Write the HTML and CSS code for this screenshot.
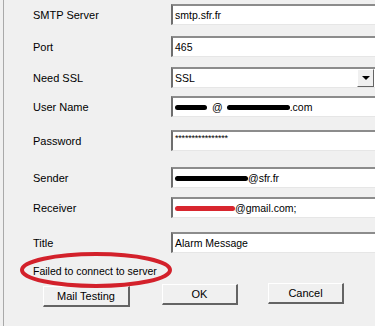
FILE: index.html
```html
<!DOCTYPE html>
<html lang="en">
<head>
    <meta charset="UTF-8">
    <meta name="viewport" content="width=device-width, initial-scale=1.0">
    <title>Mail Settings</title>
    <link rel="stylesheet" href="styles.css">
</head>
<body>
    <div class="dialog">
        <div class="form">
            <div class="row">
                <span class="label">SMTP Server</span>
                <div class="field">smtp.sfr.fr</div>
            </div>
            <div class="row">
                <span class="label">Port</span>
                <div class="field">465</div>
            </div>
            <div class="row">
                <span class="label">Need SSL</span>
                <div class="field select">
                    <span>SSL</span>
                    <span class="drop"><span class="tri"></span></span>
                </div>
            </div>
            <div class="row">
                <span class="label">User Name</span>
                <div class="field">
                    <span class="blot blot-user"></span>
                    <span class="at">@</span>
                    <span class="blot blot-domain"></span>.com
                </div>
            </div>
            <div class="row">
                <span class="label">Password</span>
                <div class="field password">****************</div>
            </div>
            <div class="row">
                <span class="label">Sender</span>
                <div class="field"><span class="blot blot-sender"></span>@sfr.fr</div>
            </div>
            <div class="row">
                <span class="label">Receiver</span>
                <div class="field"><span class="blot blot-red"></span>@gmail.com;</div>
            </div>
            <div class="row">
                <span class="label">Title</span>
                <div class="field">Alarm Message</div>
            </div>
        </div>

        <div class="status">
            Failed to connect to server
            <svg class="mark" width="154" height="38" viewBox="0 0 154 38">
                <ellipse cx="77" cy="19" rx="74" ry="16" fill="none" stroke="#d3212b" stroke-width="4"/>
            </svg>
        </div>

        <div class="buttons">
            <button class="btn btn-test">Mail Testing</button>
            <button class="btn btn-ok">OK</button>
            <button class="btn btn-cancel">Cancel</button>
        </div>
    </div>
</body>
</html>
```

FILE: styles.css
```css
html, body {
    margin: 0;
    padding: 0;
    background: #f0f0f0;
    overflow: hidden;
}
.dialog {
    width: 375px;
    height: 326px;
    box-sizing: border-box;
    padding-top: 4px;
    border-left: 1px solid #a9a9a9;
    margin-left: 3px;
    font-family: "Liberation Sans", Arial, sans-serif;
    font-size: 10.5px;
    color: #000;
    overflow: hidden;
}
.row {
    display: grid;
    grid-template-columns: 138px 220px;
    align-items: center;
    height: 21px;
    padding-left: 29px;
}
.row:nth-child(2) { margin-top: 11px; }
.row:nth-child(3) { margin-top: 10px; }
.row:nth-child(4) { margin-top: 8px; }
.row:nth-child(5) { margin-top: 13px; }
.row:nth-child(6) { margin-top: 16px; }
.row:nth-child(7) { margin-top: 9px; }
.row:nth-child(8) { margin-top: 14px; }
.label {
    font-size: 11px;
}
.field {
    height: 21px;
    box-sizing: border-box;
    background: #fff;
    border-top: 2px solid #8c8c8c;
    border-left: 2px solid #6e6e6e;
    border-right: 1px solid #e6e6e6;
    border-bottom: 1px solid #e6e6e6;
    padding: 0 2px;
    display: flex;
    align-items: center;
    white-space: nowrap;
}
.select {
    padding-right: 0;
}
.drop {
    margin-left: auto;
    margin-right: 16px;
    width: 15px;
    height: 16px;
    background: #f0f0f0;
    border-top: 1px solid #fff;
    border-left: 1px solid #fff;
    border-right: 1px solid #646464;
    border-bottom: 1px solid #646464;
    display: flex;
    align-items: center;
    justify-content: center;
}
.tri {
    width: 0;
    height: 0;
    border-left: 4px solid transparent;
    border-right: 4px solid transparent;
    border-top: 4px solid #000;
}
.password {
    align-items: flex-start;
    padding-top: 1px;
    letter-spacing: -0.2px;
    font-size: 9px;
}
.blot {
    display: inline-block;
    height: 5px;
    border-radius: 3px;
    background: #000;
}
.blot-user {
    width: 32px;
}
.at {
    margin: 0 4px 0 5px;
}
.blot-domain {
    width: 63px;
}
.blot-sender {
    width: 73px;
}
.blot-red {
    width: 60px;
    background: #d8262e;
}
.status {
    position: relative;
    margin-top: 11px;
    padding-left: 29px;
    height: 14px;
    line-height: 14px;
    font-size: 10.5px;
}
.mark {
    position: absolute;
    left: 15px;
    top: -13px;
}
.buttons {
    display: flex;
    align-items: flex-start;
    margin-top: 6px;
}
.btn {
    height: 21px;
    box-sizing: border-box;
    background: #f0f0f0;
    border-top: 1px solid #fff;
    border-left: 1px solid #fff;
    border-right: 2px solid #646464;
    border-bottom: 2px solid #646464;
    font-family: "Liberation Sans", Arial, sans-serif;
    font-size: 11px;
    color: #000;
    padding: 0;
}
.btn-test {
    width: 87px;
    margin-left: 39px;
    margin-top: 2px;
}
.btn-ok {
    width: 76px;
    margin-left: 32px;
}
.btn-cancel {
    width: 76px;
    margin-left: 30px;
    margin-top: -1px;
}
```
